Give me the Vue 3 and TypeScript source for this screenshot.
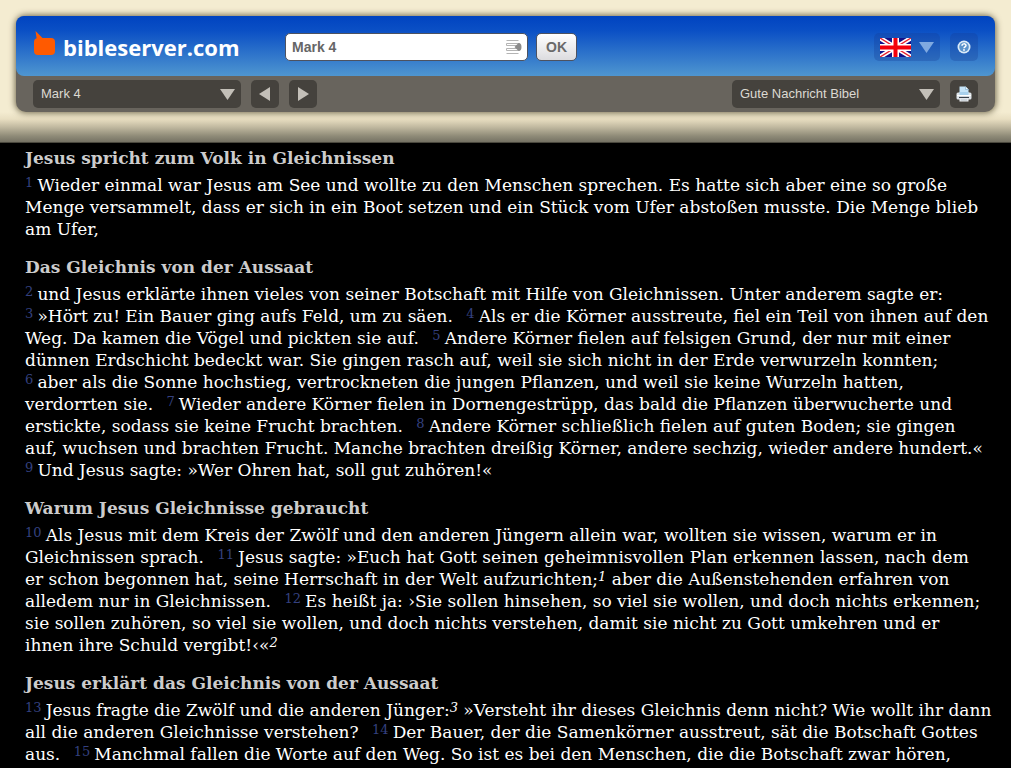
<script setup lang="ts">
import { ref } from 'vue'

interface Part {
  text: string
  note?: number
}

interface Verse {
  n: number
  parts: Part[]
}

interface Section {
  title: string
  verses: Verse[]
}

const query = ref('Mark 4')
const chapter = ref('Mark 4')
const translation = ref('Gute Nachricht Bibel')

const v = (n: number, ...parts: Part[]): Verse => ({ n, parts })

const sections: Section[] = [
  {
    title: 'Jesus spricht zum Volk in Gleichnissen',
    verses: [
      v(1, { text: 'Wieder einmal war Jesus am See und wollte zu den Menschen sprechen. Es hatte sich aber eine so große Menge versammelt, dass er sich in ein Boot setzen und ein Stück vom Ufer abstoßen musste. Die Menge blieb am Ufer,' }),
    ],
  },
  {
    title: 'Das Gleichnis von der Aussaat',
    verses: [
      v(2, { text: 'und Jesus erklärte ihnen vieles von seiner Botschaft mit Hilfe von Gleichnissen. Unter anderem sagte er:' }),
      v(3, { text: '»Hört zu! Ein Bauer ging aufs Feld, um zu säen.' }),
      v(4, { text: 'Als er die Körner ausstreute, fiel ein Teil von ihnen auf den Weg. Da kamen die Vögel und pickten sie auf.' }),
      v(5, { text: 'Andere Körner fielen auf felsigen Grund, der nur mit einer dünnen Erdschicht bedeckt war. Sie gingen rasch auf, weil sie sich nicht in der Erde verwurzeln konnten;' }),
      v(6, { text: 'aber als die Sonne hochstieg, vertrockneten die jungen Pflanzen, und weil sie keine Wurzeln hatten, verdorrten sie.' }),
      v(7, { text: 'Wieder andere Körner fielen in Dornengestrüpp, das bald die Pflanzen überwucherte und erstickte, sodass sie keine Frucht brachten.' }),
      v(8, { text: 'Andere Körner schließlich fielen auf guten Boden; sie gingen auf, wuchsen und brachten Frucht. Manche brachten dreißig Körner, andere sechzig, wieder andere hundert.«' }),
      v(9, { text: 'Und Jesus sagte: »Wer Ohren hat, soll gut zuhören!«' }),
    ],
  },
  {
    title: 'Warum Jesus Gleichnisse gebraucht',
    verses: [
      v(10, { text: 'Als Jesus mit dem Kreis der Zwölf und den anderen Jüngern allein war, wollten sie wissen, warum er in Gleichnissen sprach.' }),
      v(11, { text: 'Jesus sagte: »Euch hat Gott seinen geheimnisvollen Plan erkennen lassen, nach dem er schon begonnen hat, seine Herrschaft in der Welt aufzurichten;', note: 1 }, { text: ' aber die Außenstehenden erfahren von alledem nur in Gleichnissen.' }),
      v(12, { text: 'Es heißt ja: ›Sie sollen hinsehen, so viel sie wollen, und doch nichts erkennen; sie sollen zuhören, so viel sie wollen, und doch nichts verstehen, damit sie nicht zu Gott umkehren und er ihnen ihre Schuld vergibt!‹«', note: 2 }),
    ],
  },
  {
    title: 'Jesus erklärt das Gleichnis von der Aussaat',
    verses: [
      v(13, { text: 'Jesus fragte die Zwölf und die anderen Jünger:', note: 3 }, { text: ' »Versteht ihr dieses Gleichnis denn nicht? Wie wollt ihr dann all die anderen Gleichnisse verstehen?' }),
      v(14, { text: 'Der Bauer, der die Samenkörner ausstreut, sät die Botschaft Gottes aus.' }),
      v(15, { text: 'Manchmal fallen die Worte auf den Weg. So ist es bei den Menschen, die die Botschaft zwar hören,' }),
    ],
  },
]
</script>

<template>
  <div class="page">
    <header class="top">
      <div class="panel">
        <div class="bar blue">
          <a class="brand" href="#">
            <svg class="logo" width="24" height="26" viewBox="0 0 24 26" aria-hidden="true">
              <path d="M2.5 0 9.500 7H18a4 4 0 0 1 4 4v9a4 4 0 0 1-4 4H5a4 4 0 0 1-4-4v-9c0-2 1-3.300 2.600-3.800Z" fill="#ff5a00" />
            </svg>
            <span>bibleserver.com</span>
          </a>
          <form class="search" @submit.prevent>
            <div class="field">
              <input v-model="query" type="text" aria-label="Bibelstelle" />
              <svg width="16" height="16" viewBox="0 0 16 16" aria-hidden="true">
                <g fill="#fff" stroke="#b4b4b4">
                  <path d="M.5 1.500h12M.5 14.500h12" />
                  <path d="M.5 4.500h13v2H.5zM.5 9.500h13v2H.5z" />
                </g>
                <path d="M8.500 8l4-4q3 0 3 4t-3 4Z" fill="#8b8b8b" />
              </svg>
            </div>
            <button class="ok" type="submit">OK</button>
          </form>
          <div class="tools">
            <button class="tile lang" type="button" aria-label="Sprache">
              <svg width="31" height="19" viewBox="0 0 31 19" aria-hidden="true">
                <rect width="31" height="19" fill="#10108a" />
                <path d="M0 0 31 19M31 0 0 19" stroke="#fff" stroke-width="4.500" />
                <path d="M0 0 31 19M31 0 0 19" stroke="#e8202c" stroke-width="1.400" />
                <path d="M15.500 0v19M0 9.500h31" stroke="#fff" stroke-width="7" />
                <path d="M15.500 0v19M0 9.500h31" stroke="#f3000c" stroke-width="4" />
              </svg>
              <svg width="15" height="11" viewBox="0 0 15 11" aria-hidden="true">
                <path d="M0 0h15L7.500 11Z" fill="#7fa9e0" />
              </svg>
            </button>
            <button class="tile" type="button" aria-label="Hilfe">
              <svg width="14" height="14" viewBox="0 0 14 14" aria-hidden="true">
                <circle cx="7" cy="7" r="6.500" fill="#dcebf8" />
                <circle cx="7" cy="7" r="4.800" fill="#5b93cc" />
                <path d="M5 5.700C5 3.300 9 3.300 9 5.500c0 1.400-2 1.300-2 2.700" fill="none" stroke="#fff" stroke-width="1.500" />
                <circle cx="7" cy="10" r=".9" fill="#fff" />
              </svg>
            </button>
          </div>
        </div>
        <nav class="bar grey">
          <div class="pick">
            <select v-model="chapter" aria-label="Kapitel">
              <option>Mark 4</option>
            </select>
            <svg width="15" height="11" viewBox="0 0 15 11" aria-hidden="true">
              <path d="M0 0h15L7.500 11Z" fill="#c3bfb8" />
            </svg>
          </div>
          <button class="tile dark" type="button" aria-label="Vorheriges Kapitel">
            <svg width="12" height="14" viewBox="0 0 12 14" aria-hidden="true">
              <path d="M11 0v14L0 7Z" fill="#c3bfb8" />
            </svg>
          </button>
          <button class="tile dark" type="button" aria-label="Nächstes Kapitel">
            <svg width="12" height="14" viewBox="0 0 12 14" aria-hidden="true">
              <path d="M1 0v14L12 7Z" fill="#c3bfb8" />
            </svg>
          </button>
          <div class="pick last">
            <select v-model="translation" aria-label="Übersetzung">
              <option>Gute Nachricht Bibel</option>
            </select>
            <svg width="15" height="11" viewBox="0 0 15 11" aria-hidden="true">
              <path d="M0 0h15L7.500 11Z" fill="#c3bfb8" />
            </svg>
          </div>
          <button class="tile dark" type="button" aria-label="Drucken">
            <svg width="16" height="16" viewBox="0 0 16 16" aria-hidden="true">
              <path d="M3.500 8V.5h6L12.500 3.500V8Z" fill="#c5e3f7" />
              <path d="M9.500.5v3h3" fill="#eef8ff" stroke="#79a9c9" stroke-width=".6" />
              <rect x=".5" y="6.500" width="15" height="7" rx="1.500" fill="#dfe5ea" />
              <path d="M3.500 6h9v3h-9Z" fill="#a8d0ec" />
              <path d="M1 9.500h14" stroke="#fff" />
              <path d="M3 11.500h10" stroke="#37404a" stroke-width="1.200" />
              <path d="M3.500 12.500h9V15.500h-9Z" fill="#f4f7fa" />
              <path d="M4.500 14h7" stroke="#9aa5ae" stroke-width=".8" />
            </svg>
          </button>
        </nav>
      </div>
    </header>
    <main class="text">
      <section v-for="s in sections" :key="s.title">
        <h2>{{ s.title }}</h2>
        <p>
          <template v-for="verse in s.verses" :key="verse.n">
            <span class="verse"><sup class="num">{{ verse.n }}&nbsp;</sup><template v-for="(part, i) in verse.parts" :key="i">{{ part.text }}<sup v-if="part.note" class="note">{{ part.note }}</sup></template></span>{{ ' ' }}
          </template>
        </p>
      </section>
    </main>
  </div>
</template>

<style>
body {
  margin: 0;
  background: #fff;
}
</style>

<style scoped>
.page {
  box-sizing: border-box;
  min-height: 100vh;
  margin-right: 13px;
  background: #000;
  color: #fff;
  font-family: "DejaVu Serif", serif;
}

.top {
  padding: 16px 16px 30px;
  background:
    linear-gradient(to top, #757264 0, #8f8b78 6px, #c1b9a0 15px, #e9dfc2 23px, rgba(244, 236, 209, 0) 30px),
    #f4ecd1;
  border-bottom: 1px solid #4a483e;
  font-family: "Liberation Sans", Arial, sans-serif;
}

.panel {
  border-radius: 10px;
  background: #68645d;
  box-shadow: 0 0 6px 1px rgba(70, 62, 35, 0.75);
}

.bar {
  display: flex;
  align-items: center;
  padding: 0 17px;
}

.blue {
  box-sizing: border-box;
  height: 60px;
  padding-top: 2px;
  border-radius: 8px;
  background: linear-gradient(#0043c0, #0b50c5 25%, #4f96d0);
}

.grey {
  gap: 10px;
  height: 36px;
}

.brand {
  display: flex;
  gap: 6px;
  flex: 0 0 252px;
  align-items: center;
  color: #fff;
  font: 700 22px/28px "Open Sans", sans-serif;
  text-decoration: none;
}

.logo {
  margin-bottom: 6px;
}

.search {
  display: flex;
  gap: 8px;
  align-items: center;
}

.field {
  display: flex;
  align-items: center;
  box-sizing: border-box;
  width: 243px;
  height: 28px;
  padding: 0 5px 0 6px;
  border: 1px solid #4d5260;
  border-radius: 5px;
  background: #fff;
}

.field input {
  flex: 1;
  min-width: 0;
  padding: 0;
  border: 0;
  outline: 0;
  background: none;
  color: #666;
  font: bold 14px/20px "Liberation Sans", Arial, sans-serif;
}

.ok {
  box-sizing: border-box;
  width: 41px;
  height: 28px;
  padding: 0;
  border: 1px solid #4d5260;
  border-radius: 5px;
  background: linear-gradient(#fff, #dcdcdf);
  color: #6a6a6a;
  font: bold 14px/20px "Liberation Sans", Arial, sans-serif;
}

.tools {
  display: flex;
  gap: 10px;
  margin-left: auto;
}

.tile {
  display: flex;
  align-items: center;
  justify-content: center;
  width: 28px;
  height: 28px;
  padding: 0;
  border: 0;
  border-radius: 5px;
  background: rgba(20, 60, 150, 0.3);
}

.lang {
  gap: 8px;
  width: 66px;
}

.dark {
  background: #45423d;
}

.pick {
  display: grid;
  align-items: center;
  width: 208px;
}

.pick > * {
  grid-area: 1 / 1;
}

.pick select {
  width: 100%;
  height: 28px;
  padding: 0 28px 0 8px;
  border: 0;
  border-radius: 5px;
  appearance: none;
  background: #45423d;
  color: #dcd9d2;
  font: 13px/20px "Liberation Sans", Arial, sans-serif;
}

.pick svg {
  justify-self: end;
  margin-right: 6px;
  pointer-events: none;
}

.last {
  margin-left: auto;
}

.text {
  padding: 4px 19px 0 25px;
  font-size: 17px;
  line-height: 22px;
}

section {
  margin-bottom: 16px;
}

section:last-child {
  margin-bottom: 0;
}

h2 {
  margin: 0 0 5px;
  color: #ccc;
  font-size: 17px;
  line-height: 22px;
}

p {
  margin: 0;
}

.verse {
  padding-right: 8px;
}

sup {
  font-size: 13px;
  line-height: 0;
  vertical-align: 4px;
}

.num {
  color: #34407f;
}

.note {
  font-style: italic;
}
</style>
